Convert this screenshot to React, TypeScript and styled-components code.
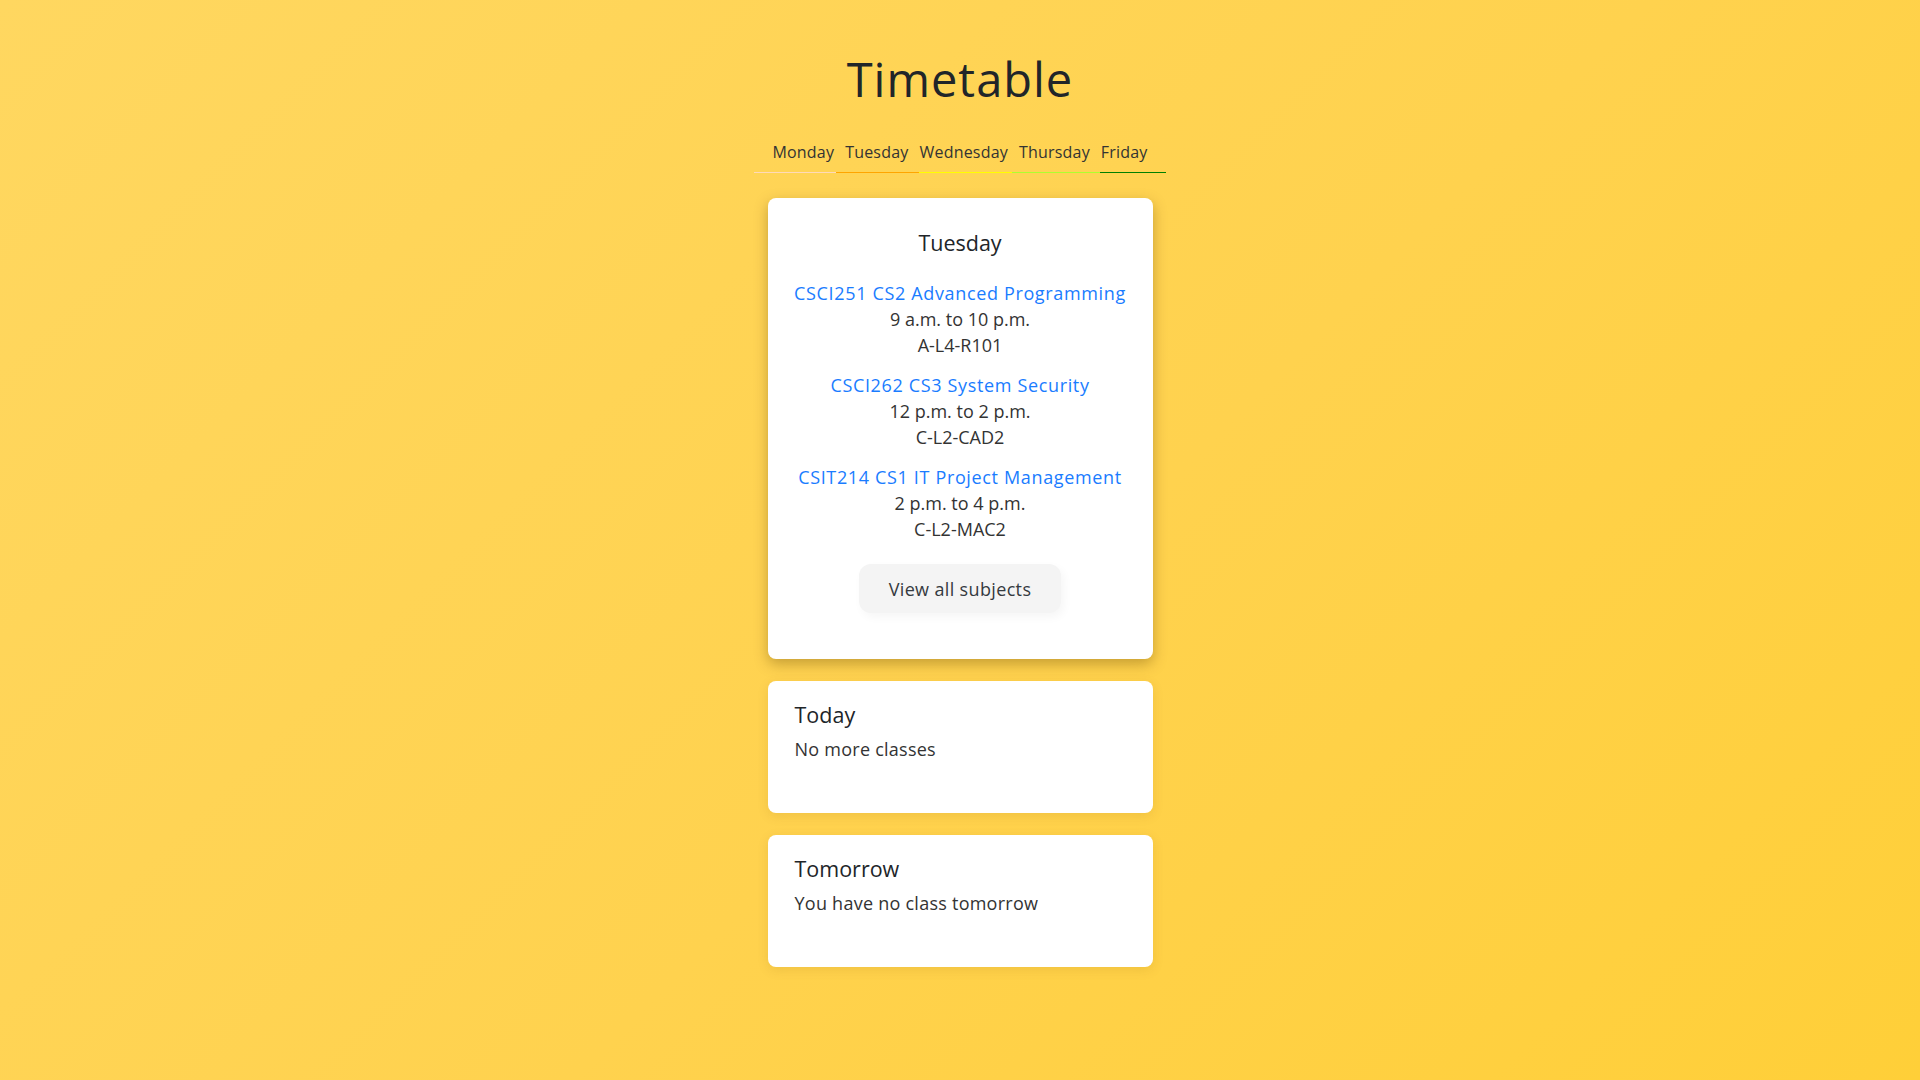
import React from "react";
import styled, { createGlobalStyle } from "styled-components";

const GlobalStyle = createGlobalStyle`
  html, body {
    margin: 0;
    padding: 0;
  }
  body {
    min-height: 100vh;
    background: linear-gradient(135deg, #ffd760 0%, #ffd24e 55%, #ffcf38 100%);
    font-family: "Open Sans", "Noto Sans", sans-serif;
    color: #333333;
  }
  * { box-sizing: border-box; }
`;

const Page = styled.main`
  min-height: 100vh;
  display: flex;
  flex-direction: column;
  align-items: center;
  padding-top: 51px;
`;

const Title = styled.h1`
  margin: 0;
  font-size: 47px;
  line-height: 56px;
  font-weight: 400;
  letter-spacing: 1px;
  color: #212529;
`;

const DayNav = styled.nav`
  margin-top: 34px;
  display: flex;
  flex-direction: column;
  align-items: center;
`;

const DayLinks = styled.div`
  display: flex;
  gap: 11px;
`;

const DayLink = styled.a`
  font-size: 16px;
  line-height: 22px;
  letter-spacing: 0.2px;
  color: #333333;
  text-decoration: none;
`;

const ColorBar = styled.div`
  margin-top: 9px;
  display: flex;
  height: 1px;
`;

const Segment = styled.span<{ $color: string; $w: number }>`
  display: block;
  width: ${(p) => p.$w}px;
  height: 1px;
  background: ${(p) => p.$color};
`;

const Stack = styled.div`
  margin-top: 25px;
  width: 385px;
  display: flex;
  flex-direction: column;
  gap: 22px;
  padding-bottom: 40px;
`;

const MainCard = styled.section`
  background: #ffffff;
  border-radius: 8px;
  box-shadow: 0 5px 14px rgba(90, 60, 0, 0.35);
  padding: 30px 16px 46px;
  display: flex;
  flex-direction: column;
  align-items: center;
  text-align: center;
`;

const CardHeading = styled.h2<{ $center?: boolean }>`
  margin: 0;
  font-size: 21.5px;
  line-height: 29px;
  font-weight: 400;
  color: #212529;
  text-align: ${(p) => (p.$center ? "center" : "left")};
`;

const CourseList = styled.ul`
  list-style: none;
  margin: 23px 0 0;
  padding: 0;
  display: flex;
  flex-direction: column;
  gap: 14px;
`;

const Course = styled.li`
  display: flex;
  flex-direction: column;
  align-items: center;
`;

const CourseLink = styled.a`
  font-size: 18px;
  line-height: 26px;
  letter-spacing: 0.65px;
  color: #1a7cff;
  text-decoration: none;
`;

const CourseLine = styled.span`
  font-size: 18px;
  line-height: 26px;
  color: #333333;
`;

const ViewButton = styled.button`
  margin-top: 22px;
  height: 49px;
  padding: 0 30px;
  border: none;
  border-radius: 12px;
  background: #f4f4f4;
  box-shadow: 3px 4px 10px rgba(0, 0, 0, 0.04);
  font-family: inherit;
  font-size: 18px;
  letter-spacing: 0.35px;
  color: #343a40;
  cursor: pointer;
`;

const InfoCard = styled.section`
  background: #ffffff;
  border-radius: 8px;
  box-shadow: 0 3px 12px rgba(120, 80, 0, 0.12);
  min-height: 132px;
  padding: 19px 27px 20px;
  display: flex;
  flex-direction: column;
`;

const InfoText = styled.p`
  margin: 7px 0 0;
  font-size: 18px;
  line-height: 26px;
  letter-spacing: 0.25px;
  color: #333333;
`;

const days = [
  { name: "Monday", color: "#ffdab9", w: 82 },
  { name: "Tuesday", color: "#ffa500", w: 83 },
  { name: "Wednesday", color: "#ffff00", w: 93 },
  { name: "Thursday", color: "#adff2f", w: 88 },
  { name: "Friday", color: "#008000", w: 66 },
];

const courses = [
  { title: "CSCI251 CS2 Advanced Programming", time: "9 a.m. to 10 p.m.", room: "A-L4-R101" },
  { title: "CSCI262 CS3 System Security", time: "12 p.m. to 2 p.m.", room: "C-L2-CAD2" },
  { title: "CSIT214 CS1 IT Project Management", time: "2 p.m. to 4 p.m.", room: "C-L2-MAC2" },
];

export default function App() {
  return (
    <>
      <GlobalStyle />
      <Page>
        <Title>Timetable</Title>
        <DayNav>
          <DayLinks>
            {days.map((d) => (
              <DayLink key={d.name} href="#">
                {d.name}
              </DayLink>
            ))}
          </DayLinks>
          <ColorBar>
            {days.map((d) => (
              <Segment key={d.name} $color={d.color} $w={d.w} />
            ))}
          </ColorBar>
        </DayNav>
        <Stack>
          <MainCard>
            <CardHeading $center>Tuesday</CardHeading>
            <CourseList>
              {courses.map((c) => (
                <Course key={c.title}>
                  <CourseLink href="#">{c.title}</CourseLink>
                  <CourseLine>{c.time}</CourseLine>
                  <CourseLine>{c.room}</CourseLine>
                </Course>
              ))}
            </CourseList>
            <ViewButton>View all subjects</ViewButton>
          </MainCard>
          <InfoCard>
            <CardHeading>Today</CardHeading>
            <InfoText>No more classes</InfoText>
          </InfoCard>
          <InfoCard>
            <CardHeading>Tomorrow</CardHeading>
            <InfoText>You have no class tomorrow</InfoText>
          </InfoCard>
        </Stack>
      </Page>
    </>
  );
}
